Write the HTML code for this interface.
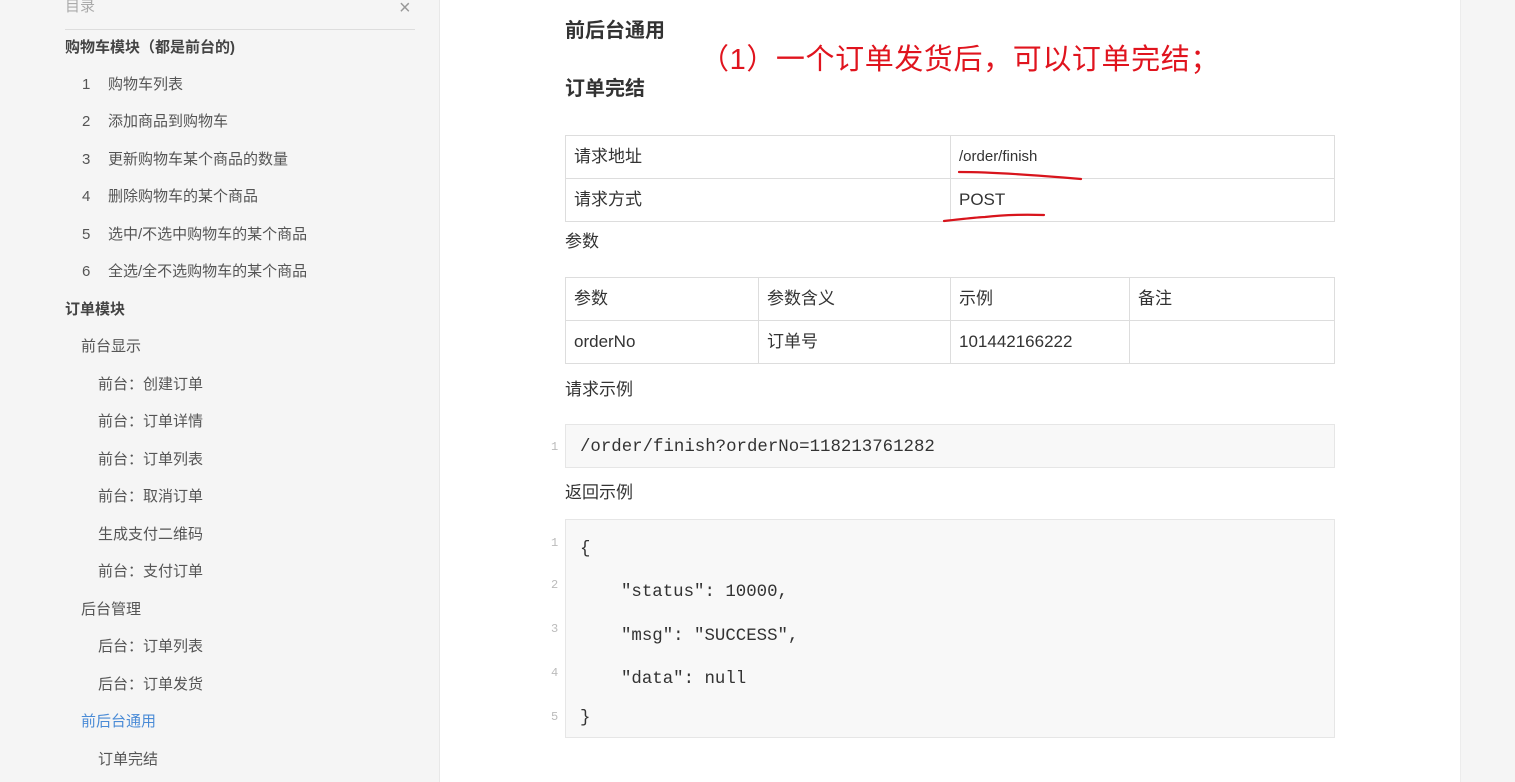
<!DOCTYPE html>
<html><head><meta charset="utf-8"><style>
*{margin:0;padding:0;box-sizing:border-box}
body{width:1515px;height:782px;overflow:hidden;background:#fff;font-family:"Liberation Sans","Noto Sans CJK SC",sans-serif;position:relative;color:#333}
.a{position:absolute;white-space:nowrap;line-height:1}
#side{position:absolute;left:0;top:0;width:440px;height:782px;background:#f5f5f5;border-right:1px solid #e8e8e8}
#rt{position:absolute;left:1460px;top:0;width:55px;height:782px;background:#f5f5f5;border-left:1px solid #ececec}
.s{font-size:15px;color:#555}
.b{font-weight:bold;color:#444}
table{position:absolute;border-collapse:collapse;font-size:17px;color:#333;table-layout:fixed}
td{border:1px solid #ddd;padding:0 8px;height:43px;line-height:20px;vertical-align:middle;overflow:hidden;white-space:nowrap}
.code{position:absolute;left:565px;width:770px;background:#f8f8f8;border:1px solid #e6e6e6;font-family:"Liberation Mono","DejaVu Sans Mono",monospace;font-size:17.4px;color:#333}
.ln{position:absolute;font-family:"Liberation Mono",monospace;font-size:12px;color:#bbb;line-height:1}
.m{font-size:17px;color:#333}
</style></head><body>
<div id="side">
<div class="a s" style="left:65px;top:-1px;color:#aaa">目录</div>
<div class="a" style="left:399px;top:-2px;font-size:20px;color:#999">×</div>
<div style="position:absolute;left:65px;top:29px;width:350px;border-top:1px solid #ddd"></div>
<div class="a s b" style="left:65px;top:40px">购物车模块（都是前台的)</div>
<div class="a s" style="left:82px;top:77px">1</div><div class="a s" style="left:108px;top:77px">购物车列表</div>
<div class="a s" style="left:82px;top:114px">2</div><div class="a s" style="left:108px;top:114px">添加商品到购物车</div>
<div class="a s" style="left:82px;top:152px">3</div><div class="a s" style="left:108px;top:152px">更新购物车某个商品的数量</div>
<div class="a s" style="left:82px;top:189px">4</div><div class="a s" style="left:108px;top:189px">删除购物车的某个商品</div>
<div class="a s" style="left:82px;top:227px">5</div><div class="a s" style="left:108px;top:227px">选中/不选中购物车的某个商品</div>
<div class="a s" style="left:82px;top:264px">6</div><div class="a s" style="left:108px;top:264px">全选/全不选购物车的某个商品</div>
<div class="a s b" style="left:65px;top:302px">订单模块</div>
<div class="a s" style="left:81px;top:339px">前台显示</div>
<div class="a s" style="left:98px;top:377px">前台：创建订单</div>
<div class="a s" style="left:98px;top:414px">前台：订单详情</div>
<div class="a s" style="left:98px;top:452px">前台：订单列表</div>
<div class="a s" style="left:98px;top:489px">前台：取消订单</div>
<div class="a s" style="left:98px;top:527px">生成支付二维码</div>
<div class="a s" style="left:98px;top:564px">前台：支付订单</div>
<div class="a s" style="left:81px;top:602px">后台管理</div>
<div class="a s" style="left:98px;top:639px">后台：订单列表</div>
<div class="a s" style="left:98px;top:677px">后台：订单发货</div>
<div class="a s" style="left:81px;top:714px;color:#4a8bd6">前后台通用</div>
<div class="a s" style="left:98px;top:752px">订单完结</div>
</div>
<div id="rt"></div>

<div class="a" style="left:565px;top:21px;font-size:20px;font-weight:bold;color:#333">前后台通用</div>
<div class="a" style="left:700px;top:46px;font-size:29px;color:#e0141e;letter-spacing:0.6px">（1）一个订单发货后，可以订单完结；</div>
<div class="a" style="left:565px;top:79px;font-size:20px;font-weight:bold;color:#333">订单完结</div>

<table style="left:565px;top:135px;width:770px">
<tr><td style="width:385px">请求地址</td><td style="font-size:15px">/order/finish</td></tr>
<tr><td>请求方式</td><td>POST</td></tr>
</table>
<div class="a m" style="left:565px;top:233px">参数</div>
<table style="left:565px;top:277px;width:770px">
<tr><td style="width:193px">参数</td><td style="width:192px">参数含义</td><td style="width:179px">示例</td><td>备注</td></tr>
<tr><td>orderNo</td><td>订单号</td><td>101442166222</td><td></td></tr>
</table>
<div class="a m" style="left:565px;top:381px">请求示例</div>
<div class="code" style="top:424px;height:44px"><div class="a" style="left:14px;top:14px">/order/finish?orderNo=118213761282</div></div>
<div class="ln" style="left:551px;top:441px">1</div>
<div class="a m" style="left:565px;top:484px">返回示例</div>
<div class="code" style="top:519px;height:219px">
<div class="a" style="left:14px;top:21px">{</div>
<div class="a" style="left:55px;top:64px">"status": 10000,</div>
<div class="a" style="left:55px;top:108px">"msg": "SUCCESS",</div>
<div class="a" style="left:55px;top:151px">"data": null</div>
<div class="a" style="left:14px;top:190px">}</div>
</div>
<div class="ln" style="left:551px;top:537px">1</div>
<div class="ln" style="left:551px;top:579px">2</div>
<div class="ln" style="left:551px;top:623px">3</div>
<div class="ln" style="left:551px;top:667px">4</div>
<div class="ln" style="left:551px;top:711px">5</div>

<svg style="position:absolute;left:0;top:0" width="1515" height="782">
<path d="M959 172 Q1000 172 1081 179" stroke="#d8141c" stroke-width="2.2" fill="none" stroke-linecap="round"/>
<path d="M944 221 Q980 217 985 217 Q1010 214 1044 215" stroke="#d8141c" stroke-width="2.2" fill="none" stroke-linecap="round"/>
</svg>
</body></html>
